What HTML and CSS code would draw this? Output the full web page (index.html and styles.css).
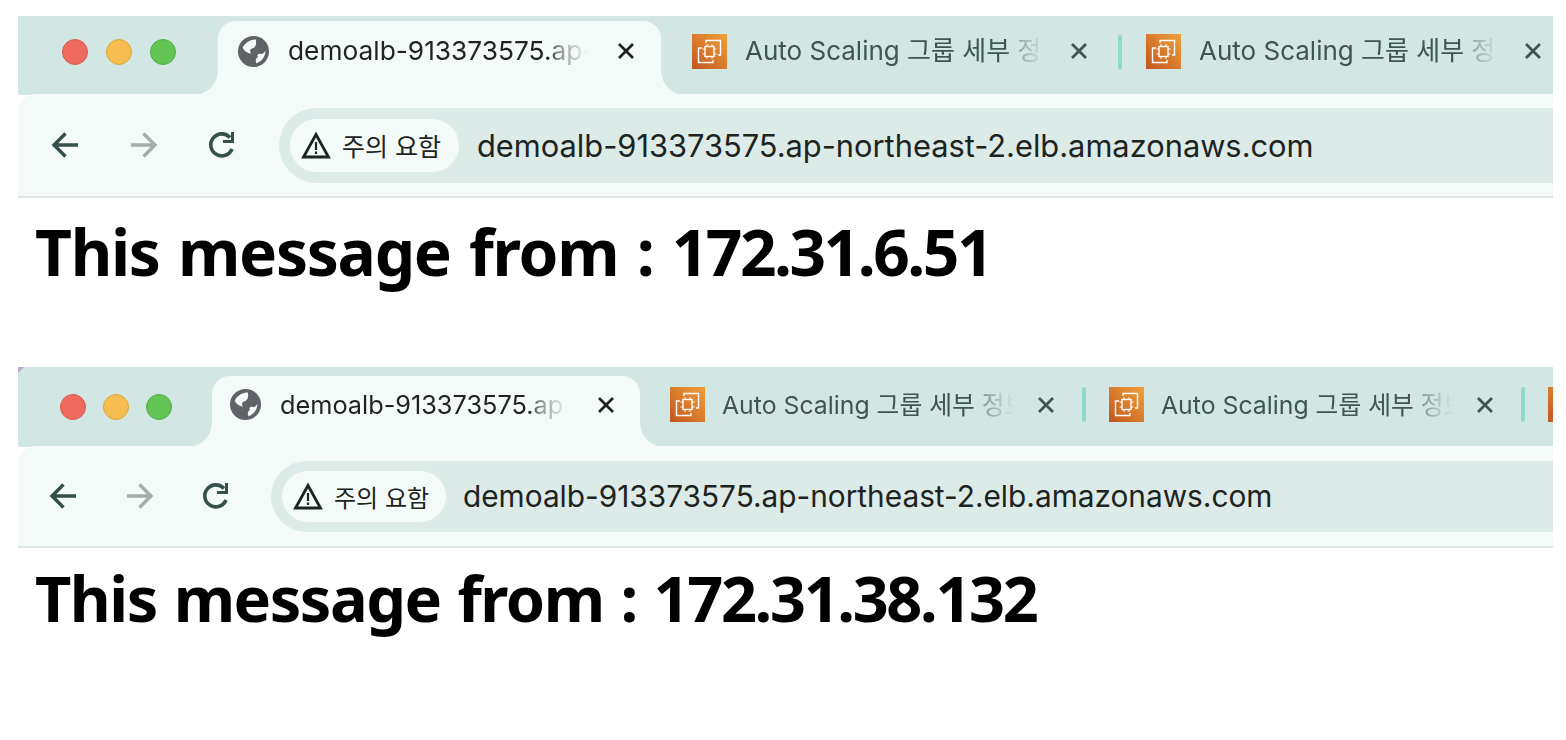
FILE: index.html
```html
<!DOCTYPE html>
<html lang="en">
<head>
  <meta charset="UTF-8">
  <meta name="viewport" content="width=device-width, initial-scale=1">
  <title>This message from</title>
  <link rel="stylesheet" href="styles.css">
</head>
<body>

  <svg class="sprites" width="0" height="0">
    <symbol id="globe" viewBox="2 2 20 20">
      <circle cx="12" cy="12" r="10" fill="#5f6368"/>
      <path fill="#f4faf8" d="M13.500 4.200C9.500 4 6.500 6.500 5 9.500c1 2 3 3.500 5.500 4-1-1.500-1-3 .5-3.500 2-.5 3.200-2 2.500-5.800z"/>
      <path fill="#f4faf8" d="M19.700 11.500c0 4-2.700 7-5.700 8.100-1-1.600-.5-3.600 1-4.100-1-1-.1-2.500 1.500-2 1 .5 2-.3 3.200-2z"/>
    </symbol>
    <symbol id="close" viewBox="0 0 18 18">
      <path fill="none" stroke="currentColor" stroke-width="2.800" d="M2 2l14 14M16 2L2 16"/>
    </symbol>
    <linearGradient id="ec2-fill" x1="0" y1="1" x2="1" y2="0">
      <stop offset="0" stop-color="#c2561f"/>
      <stop offset="1" stop-color="#f0a03a"/>
    </linearGradient>
    <symbol id="ec2" viewBox="0 0 35 35">
      <rect width="35" height="35" fill="url(#ec2-fill)"/>
      <g fill="none" stroke="#fff" stroke-width="1.400">
        <path d="M14 9V6.500h14.500V21H26"/>
        <path d="M10 14H6.500V28.500H21V26"/>
        <rect x="13" y="12.500" width="9" height="10"/>
        <path d="M15 10v2.500M20 10v2.500M15 22.500V25M20 22.500V25M10.500 15H13M10.500 20H13M22 15h2.500M22 20h2.500" stroke-width="1"/>
      </g>
    </symbol>
    <symbol id="back" viewBox="0 0 28 28">
      <path fill="none" stroke="currentColor" stroke-width="3.400" d="M27 14H4M14.500 2.500L3 14l11.500 11.500"/>
    </symbol>
    <symbol id="forward" viewBox="0 0 28 28">
      <path fill="none" stroke="currentColor" stroke-width="3.400" d="M1 14h23M13.500 2.500L25 14 13.500 25.500"/>
    </symbol>
    <symbol id="reload" viewBox="0 0 28 28">
      <path fill="none" stroke="currentColor" stroke-width="3.600" d="M24 18a11 11 0 1 1-2-11.500"/>
      <path fill="currentColor" d="M26 1v11H15v-3h8V1z"/>
    </symbol>
    <symbol id="warn" viewBox="0 0 30 28">
      <path fill="none" stroke="currentColor" stroke-width="2.800" d="M15 3.500L2.500 26h25z"/>
      <path fill="none" stroke="currentColor" stroke-width="2.200" d="M15 11v8M15 20.500v2.500"/>
    </symbol>
  </svg>

  <section class="shot shot-a">
    <div class="tabstrip">
      <div class="lights">
        <span class="light red"></span>
        <span class="light yellow"></span>
        <span class="light green"></span>
      </div>
      <div class="tab active">
        <svg class="globe"><use href="#globe"/></svg>
        <span class="tab-title">demoalb-913373575.ap-northeast-2</span>
        <svg class="close"><use href="#close"/></svg>
      </div>
      <div class="tab">
        <svg class="favicon"><use href="#ec2"/></svg>
        <span class="tab-title">Auto Scaling 그룹 세부 정보 EC2</span>
        <svg class="close"><use href="#close"/></svg>
      </div>
      <span class="tab-sep"></span>
      <div class="tab">
        <svg class="favicon"><use href="#ec2"/></svg>
        <span class="tab-title">Auto Scaling 그룹 세부 정보 EC2</span>
        <svg class="close"><use href="#close"/></svg>
      </div>
    </div>
    <div class="toolbar">
      <div class="nav">
        <svg class="nav-icon"><use href="#back"/></svg>
        <svg class="nav-icon off"><use href="#forward"/></svg>
        <svg class="nav-icon"><use href="#reload"/></svg>
      </div>
      <div class="omnibox">
        <div class="chip">
          <svg class="warn"><use href="#warn"/></svg>
          <span>주의 요함</span>
        </div>
        <span class="url">demoalb-913373575.ap-northeast-2.elb.amazonaws.com</span>
      </div>
    </div>
    <h1>This message from : <span class="ip">172.31.6.51</span></h1>
  </section>

  <section class="shot shot-b">
    <div class="tabstrip">
      <div class="lights">
        <span class="light red"></span>
        <span class="light yellow"></span>
        <span class="light green"></span>
      </div>
      <div class="tab active">
        <svg class="globe"><use href="#globe"/></svg>
        <span class="tab-title">demoalb-913373575.ap-northeast-2</span>
        <svg class="close"><use href="#close"/></svg>
      </div>
      <div class="tab">
        <svg class="favicon"><use href="#ec2"/></svg>
        <span class="tab-title">Auto Scaling 그룹 세부 정보 EC2</span>
        <svg class="close"><use href="#close"/></svg>
      </div>
      <span class="tab-sep"></span>
      <div class="tab">
        <svg class="favicon"><use href="#ec2"/></svg>
        <span class="tab-title">Auto Scaling 그룹 세부 정보 EC2</span>
        <svg class="close"><use href="#close"/></svg>
      </div>
      <span class="tab-sep"></span>
      <div class="tab">
        <svg class="favicon"><use href="#ec2"/></svg>
      </div>
    </div>
    <div class="toolbar">
      <div class="nav">
        <svg class="nav-icon"><use href="#back"/></svg>
        <svg class="nav-icon off"><use href="#forward"/></svg>
        <svg class="nav-icon"><use href="#reload"/></svg>
      </div>
      <div class="omnibox">
        <div class="chip">
          <svg class="warn"><use href="#warn"/></svg>
          <span>주의 요함</span>
        </div>
        <span class="url">demoalb-913373575.ap-northeast-2.elb.amazonaws.com</span>
      </div>
    </div>
    <h1>This message from : <span class="ip">172.31.38.132</span></h1>
  </section>

</body>
</html>
```

FILE: styles.css
```css
* {
  box-sizing: border-box;
}

html, body {
  height: 100%;
}

body {
  margin: 0;
  padding: 16px 13px 0 18px;
  background: #fff;
  font-family: Inter, "Noto Sans CJK KR", sans-serif;
  overflow: hidden;
}

.sprites {
  display: block;
  height: 0;
}

.shot {
  overflow: hidden;
}

/* sizes of the two captures */
.shot-a {
  --strip-h: 79px;
  --tab-h: 74px;
  --lights-w: 200px;
  --light-gap: 18px;
  --light-first: 44px;
  --active-w: 443px;
  --active-pad: 20px;
  --title-active: 300px;
  --title-size: 26.300px;
  --title-inactive: 26px;
  --tab-title: 300px;
  --tab-gap-title: 18px;
  --tab-gap-close: 25px;
  --after-active: 31px;
  --sep-left: 30px;
  --sep-right: 24px;
  --toolbar-h: 104px;
  --nav-pad: 33px;
  --nav-gap: 50.500px;
  --omni-h: 75px;
  --omni-left: 279px;
  --chip-h: 53px;
  --chip-w: 169px;
  --chip-size: 25px;
  --url-size: 30.800px;
  --url-left: 18px;
  --h1-size: 64px;
  --h1-spacing: -1.300px;
  --h1-word: 3px;
  --ip-spacing: -2.500px;
  --h1-top: 12px;
}

.shot-b {
  --strip-h: 80px;
  --tab-h: 71px;
  --lights-w: 194px;
  --light-gap: 17px;
  --light-first: 42px;
  --active-w: 428px;
  --active-pad: 18px;
  --title-active: 288px;
  --title-size: 25.300px;
  --title-inactive: 24.800px;
  --tab-title: 292px;
  --tab-gap-title: 17px;
  --tab-gap-close: 23px;
  --after-active: 30px;
  --sep-left: 27px;
  --sep-right: 23px;
  --toolbar-h: 102px;
  --nav-pad: 31px;
  --nav-gap: 48.500px;
  --omni-h: 71px;
  --omni-left: 271px;
  --chip-h: 51px;
  --chip-w: 164px;
  --chip-size: 24px;
  --url-size: 29.800px;
  --url-left: 17px;
  --h1-size: 63px;
  --h1-spacing: -1.500px;
  --h1-word: 2px;
  --ip-spacing: -2.350px;
  --h1-top: 9px;
  margin-top: 74px;
}

/* Tab strip */
.tabstrip {
  display: flex;
  align-items: flex-end;
  height: var(--strip-h);
  background: #d2e7e3;
  overflow: hidden;
}

/* sliver of the desktop behind the window corner */
.shot-b .tabstrip {
  background: linear-gradient(135deg, #b9a6dc 4px, transparent 5px) no-repeat 0 0 / 8px 8px, #d2e7e3;
}

.lights {
  flex: none;
  display: flex;
  gap: var(--light-gap);
  width: var(--lights-w);
  height: var(--tab-h);
  padding: 18px 0 0 var(--light-first);
}

.light {
  width: 26px;
  height: 26px;
  border-radius: 50%;
}

.red { background: #ee6a5f; border: 1px solid #d9584e; }
.yellow { background: #f5bd4f; border: 1px solid #dfa63c; }
.green { background: #61c454; border: 1px solid #52ad46; }

.tab {
  flex: none;
  display: flex;
  align-items: center;
  height: var(--tab-h);
  padding-bottom: 14px;
  color: #3f5551;
}

.tab.active {
  position: relative;
  width: var(--active-w);
  margin-right: var(--after-active);
  padding-left: var(--active-pad);
  background: #f4faf8;
  border-radius: 18px 18px 0 0;
  color: #1f2422;
}

/* flared feet of the active tab */
.tab.active::before,
.tab.active::after {
  content: "";
  position: absolute;
  bottom: 0;
  width: 24px;
  height: 24px;
}

.tab.active::before {
  left: -24px;
  background: radial-gradient(circle at 0 0, #d2e7e3 23.500px, #f4faf8 24px);
}

.tab.active::after {
  right: -24px;
  background: radial-gradient(circle at 100% 0, #d2e7e3 23.500px, #f4faf8 24px);
}

.globe {
  flex: none;
  width: 31px;
  height: 31px;
  margin-right: 19px;
}

.favicon {
  flex: none;
  width: 35px;
  height: 35px;
  margin-right: var(--tab-gap-title);
}

.tab-title {
  flex: none;
  width: var(--tab-title);
  overflow: hidden;
  white-space: nowrap;
  font-size: var(--title-inactive);
  line-height: 32px;
  -webkit-mask-image: linear-gradient(to right, #000 87%, rgba(0,0,0,0.5) 90%, transparent 100%);
  mask-image: linear-gradient(to right, #000 87%, rgba(0,0,0,0.5) 90%, transparent 100%);
}

.active .tab-title {
  width: var(--title-active);
  font-size: var(--title-size);
}

.close {
  flex: none;
  width: 18px;
  height: 18px;
  margin-left: var(--tab-gap-close);
}

.active .close {
  margin-left: 29px;
}

.tab-sep {
  flex: none;
  align-self: flex-end;
  width: 4px;
  height: 35px;
  margin: 0 var(--sep-right) 25px var(--sep-left);
  border-radius: 2px;
  background: #8fd8cb;
}

/* Toolbar */
.toolbar {
  position: relative;
  display: flex;
  align-items: center;
  height: var(--toolbar-h);
  background: #f4faf8;
  border-bottom: 2px solid #dde6e4;
  border-radius: 18px 0 0 0;
  margin-top: -1px;
}

.nav {
  flex: none;
  display: flex;
  gap: var(--nav-gap);
  width: calc(var(--omni-left) - 18px);
  padding-left: var(--nav-pad);
  color: #33504b;
}

.nav-icon {
  width: 28px;
  height: 28px;
}

.nav-icon.off {
  color: #a3aeab;
}

.omnibox {
  flex: 1;
  display: flex;
  align-items: center;
  height: var(--omni-h);
  padding-left: 11px;
  background: #dcebe7;
  border-radius: 38px 0 0 38px;
}

.chip {
  flex: none;
  display: flex;
  align-items: center;
  gap: 11px;
  width: var(--chip-w);
  height: var(--chip-h);
  padding-left: 11px;
  background: #f4faf8;
  border-radius: 27px;
  color: #1d2321;
  font-size: var(--chip-size);
}

.warn {
  flex: none;
  width: 30px;
  height: 28px;
}

.url {
  margin-left: var(--url-left);
  color: #1d2321;
  font-size: var(--url-size);
  white-space: nowrap;
}

/* Page text */
h1 {
  margin: var(--h1-top) 0 0 17px;
  color: #000;
  font-family: "Noto Sans", sans-serif;
  font-size: var(--h1-size);
  font-weight: 700;
  letter-spacing: var(--h1-spacing);
  word-spacing: var(--h1-word);
  line-height: 1.3;
  white-space: nowrap;
}

.ip {
  letter-spacing: var(--ip-spacing);
}
```
